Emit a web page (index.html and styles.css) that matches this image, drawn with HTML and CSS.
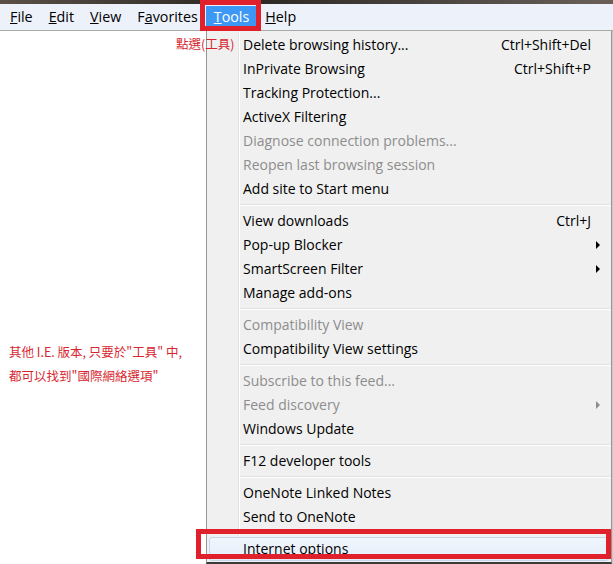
FILE: index.html
```html
<!DOCTYPE html>
<html lang="zh-Hant">
<head>
    <meta charset="UTF-8">
    <meta name="viewport" content="width=device-width, initial-scale=1.0">
    <title>Tools menu</title>
    <link rel="stylesheet" href="styles.css">
</head>
<body>
    <div class="topstrip"></div>
    <div class="menubar">
        <span class="menubar-item"><u>F</u>ile</span>
        <span class="menubar-item"><u>E</u>dit</span>
        <span class="menubar-item"><u>V</u>iew</span>
        <span class="menubar-item">F<u>a</u>vorites</span>
        <span class="menubar-item active"><u>T</u>ools</span>
        <span class="menubar-item"><u>H</u>elp</span>
        <div class="mark mark-tools"></div>
    </div>

    <div class="page">
        <div class="side">
            <p class="note note-click">點選(工具)</p>
            <p class="note note-other">其他 I.E. 版本, 只要於"工具" 中,<br>都可以找到"國際網絡選項"</p>
        </div>

        <div class="dropdown">
            <div class="item"><span>Delete browsing history...</span><span class="key">Ctrl+Shift+Del</span></div>
            <div class="item"><span>InPrivate Browsing</span><span class="key">Ctrl+Shift+P</span></div>
            <div class="item"><span>Tracking Protection...</span></div>
            <div class="item"><span>ActiveX Filtering</span></div>
            <div class="item disabled"><span>Diagnose connection problems...</span></div>
            <div class="item disabled"><span>Reopen last browsing session</span></div>
            <div class="item"><span>Add site to Start menu</span></div>
            <div class="sep"></div>
            <div class="item"><span>View downloads</span><span class="key">Ctrl+J</span></div>
            <div class="item"><span>Pop-up Blocker</span><span class="arrow"></span></div>
            <div class="item"><span>SmartScreen Filter</span><span class="arrow"></span></div>
            <div class="item"><span>Manage add-ons</span></div>
            <div class="sep"></div>
            <div class="item disabled"><span>Compatibility View</span></div>
            <div class="item"><span>Compatibility View settings</span></div>
            <div class="sep"></div>
            <div class="item disabled"><span>Subscribe to this feed...</span></div>
            <div class="item disabled"><span>Feed discovery</span><span class="arrow"></span></div>
            <div class="item"><span>Windows Update</span></div>
            <div class="sep"></div>
            <div class="item"><span>F12 developer tools</span></div>
            <div class="sep"></div>
            <div class="item"><span>OneNote Linked Notes</span></div>
            <div class="item"><span>Send to OneNote</span></div>
            <div class="sep"></div>
            <div class="item hover"><span>Internet options</span></div>
            <div class="mark mark-options"></div>
        </div>
        <div class="edge"></div>
    </div>
</body>
</html>
```

FILE: styles.css
```css
body {
    margin: 0;
    font-family: "Open Sans", "Noto Sans", sans-serif;
    font-size: 14px;
    color: #000;
    background: #fff;
    width: 613px;
    height: 564px;
    overflow: hidden;
}
.topstrip {
    height: 4px;
    background: linear-gradient(to right, #5a5048, #2a2622 40%, #4a4440 70%, #6a6058);
}
.menubar {
    position: relative;
    display: flex;
    align-items: center;
    height: 26px;
    padding-left: 2px;
    background: #edf2fa;
    border-bottom: 1px solid #a9a9a9;
    font-size: 14.3px;
}
.menubar-item {
    padding: 0 8px 1px;
    height: 22px;
    line-height: 22px;
}
.menubar-item.active {
    background: #3d97f5;
    color: #fff;
}
.mark {
    position: absolute;
    border: 5px solid #e0202a;
    box-sizing: border-box;
}
.mark-tools {
    left: 200px;
    top: -4px;
    width: 61px;
    height: 31px;
}
.page {
    display: flex;
    height: 533px;
}
.side {
    position: relative;
    width: 206px;
}
.note {
    position: absolute;
    margin: 0;
    color: #d8262e;
    font-family: "Noto Sans CJK TC", sans-serif;
    font-size: 12.5px;
    white-space: nowrap;
}
.note-click {
    top: 3px;
    left: 176px;
    z-index: 2;
}
.note-other {
    top: 309px;
    left: 9px;
    line-height: 24px;
}
.dropdown {
    position: relative;
    width: 404px;
    padding-top: 2px;
    background: #f0f0f0 linear-gradient(to right, transparent 31px, #e2e3e3 31px, #e2e3e3 32px, #fff 32px, #fff 33px, transparent 33px);
    border-left: 1px solid #979797;
    border-right: 1px solid #979797;
    border-bottom: 2px solid #3a3a3a;
}
.item {
    display: flex;
    justify-content: space-between;
    align-items: center;
    height: 23px;
    padding: 0 20px 1px 36px;
}
.item.disabled {
    color: #8d8d8d;
}
.item.hover {
    margin: 0 2px;
    padding-left: 33px;
    height: 21px;
    border: 1px solid #c3d6ee;
    border-radius: 3px;
    background: linear-gradient(#f1f6fd, #e3edfa);
}
.key {
    text-align: right;
}
.arrow {
    width: 0;
    height: 0;
    margin-right: -9px;
    border-top: 4px solid transparent;
    border-bottom: 4px solid transparent;
    border-left: 4px solid #000;
}
.item.disabled .arrow {
    border-left-color: #8d8d8d;
}
.sep {
    height: 8px;
    margin-left: 33px;
    background: linear-gradient(transparent 3px, #e0e0e0 3px, #e0e0e0 4px, #fff 4px, #fff 5px, transparent 5px);
}
.mark-options {
    left: -11px;
    top: 498px;
    width: 415px;
    height: 30px;
}
.edge {
    flex: 1;
    background: #c8c8c8;
}
```
